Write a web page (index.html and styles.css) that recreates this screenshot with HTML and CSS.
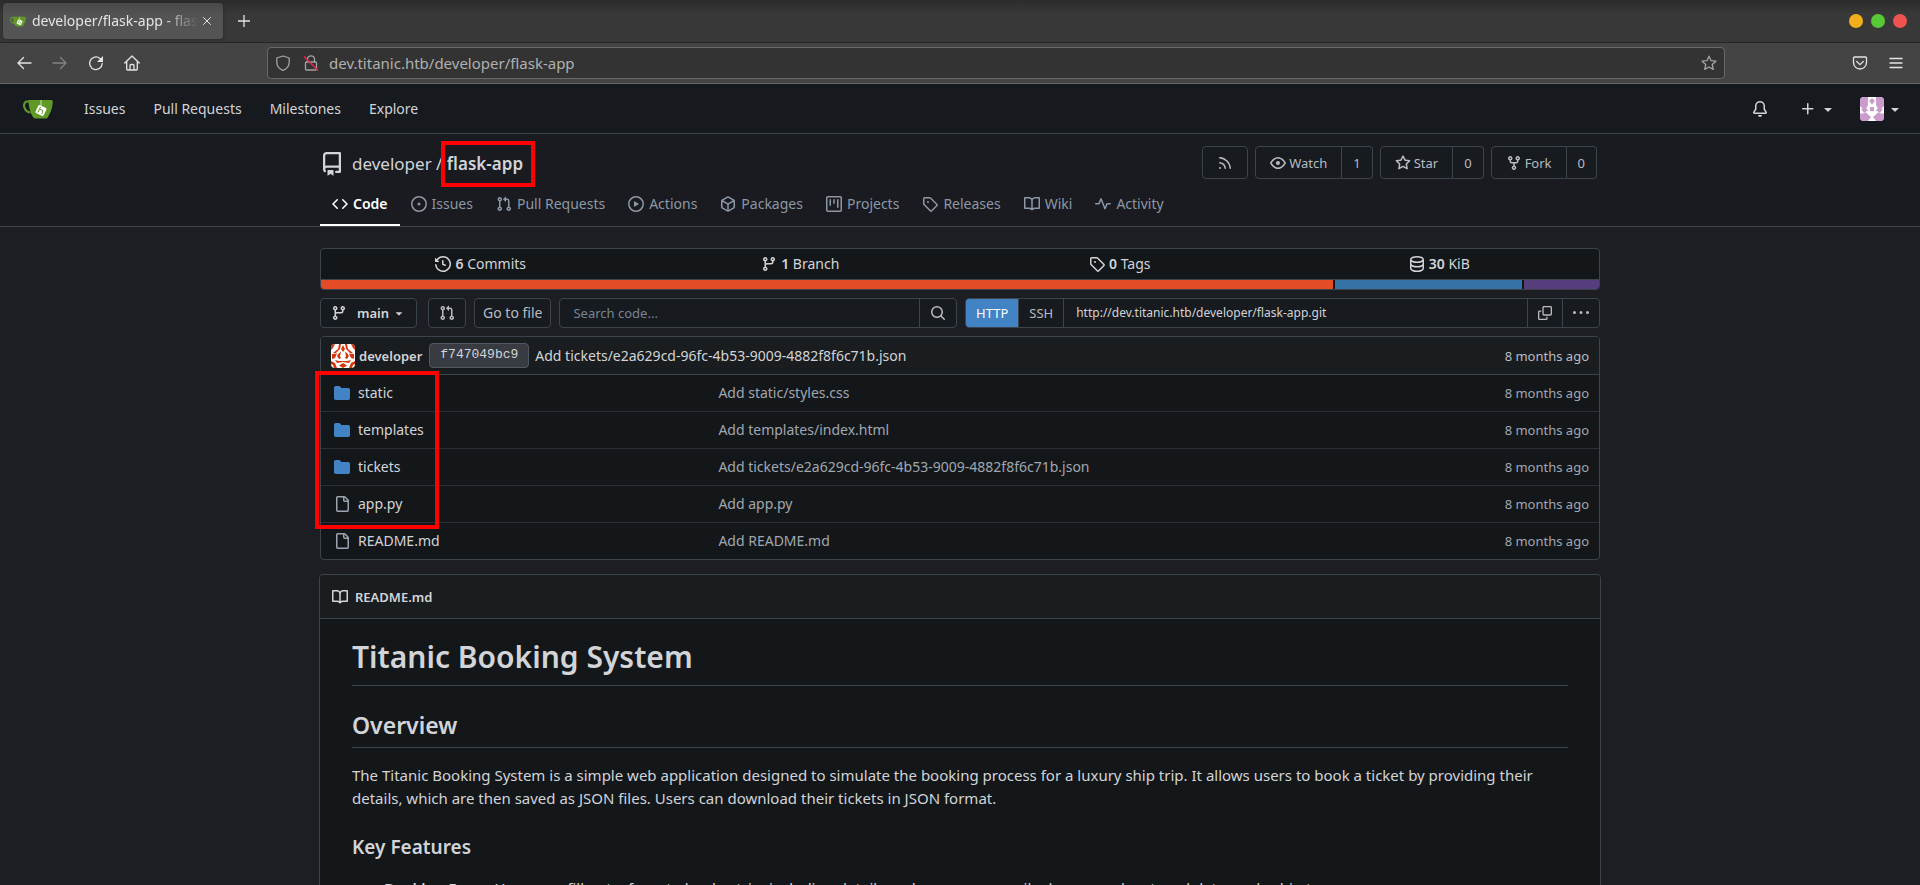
FILE: index.html
```html
<!DOCTYPE html>
<html lang="en">
<head>
<meta charset="utf-8">
<title>developer/flask-app - flask-app - Gitea</title>
<link rel="stylesheet" href="styles.css">
</head>
<body>
<svg class="sprite" aria-hidden="true">
  <symbol id="code" viewBox="0 0 16 16"><path d="m11.28 3.22 4.25 4.25a.75.75 0 0 1 0 1.06l-4.25 4.25a.749.749 0 0 1-1.275-.326.749.749 0 0 1 .215-.734L13.94 8l-3.72-3.72a.749.749 0 0 1 .326-1.275.749.749 0 0 1 .734.215Zm-6.56 0a.751.751 0 0 1 1.042.018.751.751 0 0 1 .018 1.042L2.06 8l3.72 3.72a.749.749 0 0 1-.326 1.275.749.749 0 0 1-.734-.215L.47 8.53a.75.75 0 0 1 0-1.06Z"/></symbol>
  <symbol id="issue" viewBox="0 0 16 16"><path d="M8 9.5a1.5 1.5 0 1 0 0-3 1.5 1.5 0 0 0 0 3Z"/><path d="M8 0a8 8 0 1 1 0 16A8 8 0 0 1 8 0ZM1.5 8a6.5 6.5 0 1 0 13 0 6.5 6.5 0 0 0-13 0Z"/></symbol>
  <symbol id="pull" viewBox="0 0 16 16"><path d="M1.5 3.25a2.25 2.25 0 1 1 3 2.122v5.256a2.251 2.251 0 1 1-1.5 0V5.372A2.25 2.25 0 0 1 1.5 3.25Zm5.677-.177L9.573.677A.25.25 0 0 1 10 .854V2.5h1A2.5 2.5 0 0 1 13.5 5v5.628a2.251 2.251 0 1 1-1.5 0V5a1 1 0 0 0-1-1h-1v1.646a.25.25 0 0 1-.427.177L7.177 3.427a.25.25 0 0 1 0-.354ZM3.75 2.5a.75.75 0 1 0 0 1.5.75.75 0 0 0 0-1.5Zm0 9.5a.75.75 0 1 0 0 1.5.75.75 0 0 0 0-1.5Zm8.25.75a.75.75 0 1 0 1.5 0 .75.75 0 0 0-1.5 0Z"/></symbol>
  <symbol id="play" viewBox="0 0 16 16"><path d="M8 0a8 8 0 1 1 0 16A8 8 0 0 1 8 0ZM1.5 8a6.5 6.5 0 1 0 13 0 6.5 6.5 0 0 0-13 0Zm4.879-2.773 4.264 2.559a.25.25 0 0 1 0 .428l-4.264 2.559A.25.25 0 0 1 6 10.559V5.442a.25.25 0 0 1 .379-.215Z"/></symbol>
  <symbol id="package" viewBox="0 0 16 16"><path d="m8.878.392 5.25 3.045c.54.314.872.89.872 1.514v6.098a1.75 1.75 0 0 1-.872 1.514l-5.25 3.045a1.75 1.75 0 0 1-1.756 0l-5.25-3.045A1.75 1.75 0 0 1 1 11.049V4.951c0-.624.332-1.201.872-1.514L7.122.392a1.75 1.75 0 0 1 1.756 0ZM7.875 1.69l-4.63 2.685L8 7.133l4.755-2.758-4.63-2.685a.248.248 0 0 0-.25 0ZM2.5 5.677v5.372c0 .09.047.171.125.216l4.625 2.683V8.432Zm6.25 8.271 4.625-2.683a.25.25 0 0 0 .125-.216V5.677L8.75 8.432Z"/></symbol>
  <symbol id="project" viewBox="0 0 16 16"><path d="M1.75 0h12.5C15.216 0 16 .784 16 1.75v12.5A1.75 1.75 0 0 1 14.25 16H1.75A1.75 1.75 0 0 1 0 14.25V1.75C0 .784.784 0 1.75 0ZM1.5 1.75v12.5c0 .138.112.25.25.25h12.5a.25.25 0 0 0 .25-.25V1.75a.25.25 0 0 0-.25-.25H1.75a.25.25 0 0 0-.25.25ZM11.75 3a.75.75 0 0 1 .75.75v7.5a.75.75 0 0 1-1.5 0v-7.5a.75.75 0 0 1 .75-.75Zm-8.25.75a.75.75 0 0 1 1.5 0v5.5a.75.75 0 0 1-1.5 0ZM8 3a.75.75 0 0 1 .75.75v3.5a.75.75 0 0 1-1.5 0v-3.5A.75.75 0 0 1 8 3Z"/></symbol>
  <symbol id="tag" viewBox="0 0 16 16"><path d="M1 7.775V2.75C1 1.784 1.784 1 2.75 1h5.025c.464 0 .91.184 1.238.513l6.25 6.25a1.75 1.75 0 0 1 0 2.474l-5.026 5.026a1.75 1.75 0 0 1-2.474 0l-6.25-6.25A1.752 1.752 0 0 1 1 7.775Zm1.5 0c0 .066.026.13.073.177l6.25 6.25a.25.25 0 0 0 .354 0l5.025-5.025a.25.25 0 0 0 0-.354l-6.25-6.25a.25.25 0 0 0-.177-.073H2.75a.25.25 0 0 0-.25.25ZM6 5a1 1 0 1 1 0 2 1 1 0 0 1 0-2Z"/></symbol>
  <symbol id="book" viewBox="0 0 16 16"><path d="M0 1.75A.75.75 0 0 1 .75 1h4.253c1.227 0 2.317.59 3 1.501A3.743 3.743 0 0 1 11.006 1h4.245a.75.75 0 0 1 .75.75v10.5a.75.75 0 0 1-.75.75h-4.507a2.25 2.25 0 0 0-1.591.659l-.622.621a.75.75 0 0 1-1.06 0l-.622-.621A2.25 2.25 0 0 0 5.258 13H.75a.75.75 0 0 1-.75-.75Zm7.251 10.324.004-5.073-.002-2.253A2.25 2.25 0 0 0 5.003 2.5H1.5v9h3.757a3.75 3.75 0 0 1 1.994.574ZM8.755 4.75l-.004 7.322a3.752 3.752 0 0 1 1.992-.572H14.5v-9h-3.495a2.25 2.25 0 0 0-2.25 2.25Z"/></symbol>
  <symbol id="pulse" viewBox="0 0 16 16"><path d="M6 2c.306 0 .582.187.696.471L10 10.731l1.304-3.26A.751.751 0 0 1 12 7h3.25a.75.75 0 0 1 0 1.5h-2.742l-1.812 4.528a.751.751 0 0 1-1.392 0L6 4.77 4.696 8.03A.75.75 0 0 1 4 8.5H.75a.75.75 0 0 1 0-1.5h2.742l1.812-4.529A.751.751 0 0 1 6 2Z"/></symbol>
  <symbol id="history" viewBox="0 0 16 16"><path d="m.427 1.927 1.215 1.215a8.002 8.002 0 1 1-1.6 5.685.75.75 0 1 1 1.493-.154 6.5 6.5 0 1 0 1.18-4.458l1.358 1.358A.25.25 0 0 1 3.896 6H.25A.25.25 0 0 1 0 5.75V2.104a.25.25 0 0 1 .427-.177ZM7.75 4a.75.75 0 0 1 .75.75v2.992l2.028.812a.75.75 0 0 1-.557 1.392l-2.5-1A.751.751 0 0 1 7 8.25v-3.5A.75.75 0 0 1 7.75 4Z"/></symbol>
  <symbol id="branch" viewBox="0 0 16 16"><path d="M9.5 3.25a2.25 2.25 0 1 1 3 2.122V6A2.5 2.5 0 0 1 10 8.5H6a1 1 0 0 0-1 1v1.128a2.251 2.251 0 1 1-1.5 0V5.372a2.25 2.25 0 1 1 1.5 0v1.836A2.493 2.493 0 0 1 6 7h4a1 1 0 0 0 1-1v-.628A2.25 2.25 0 0 1 9.5 3.25Zm-6 0a.75.75 0 1 0 1.5 0 .75.75 0 0 0-1.5 0Zm8.25-.75a.75.75 0 1 0 0 1.5.75.75 0 0 0 0-1.5ZM4.25 12a.75.75 0 1 0 0 1.5.75.75 0 0 0 0-1.5Z"/></symbol>
  <symbol id="database" viewBox="0 0 16 16"><path d="M1 3.5c0-.626.292-1.165.7-1.59.406-.422.956-.767 1.579-1.041C4.525.32 6.195 0 8 0c1.805 0 3.475.32 4.722.869.622.274 1.172.62 1.578 1.04.408.426.7.965.7 1.591v9c0 .626-.292 1.165-.7 1.59-.406.422-.956.767-1.579 1.041C11.476 15.68 9.806 16 8 16c-1.805 0-3.475-.32-4.721-.869-.623-.274-1.173-.62-1.579-1.04-.408-.426-.7-.965-.7-1.591Zm1.5 0c0 .133.058.318.282.551.227.237.591.483 1.101.707C4.898 5.205 6.353 5.5 8 5.5c1.646 0 3.101-.295 4.118-.742.508-.224.873-.471 1.1-.708.224-.232.282-.417.282-.55 0-.133-.058-.318-.282-.551-.227-.237-.591-.483-1.101-.707C11.102 1.795 9.647 1.5 8 1.5c-1.646 0-3.101.295-4.118.742-.508.224-.873.471-1.1.708-.224.232-.282.417-.282.55Zm0 4.5c0 .133.058.318.282.551.227.237.591.483 1.101.707C4.898 9.705 6.353 10 8 10c1.646 0 3.101-.295 4.118-.742.508-.224.873-.471 1.1-.708.224-.232.282-.417.282-.55V5.724c-.241.15-.503.286-.778.407C11.475 6.68 9.805 7 8 7c-1.805 0-3.475-.32-4.721-.869a6.15 6.15 0 0 1-.779-.407Zm0 2.225V12.5c0 .133.058.318.282.55.227.237.592.484 1.1.708 1.016.447 2.471.742 4.118.742 1.647 0 3.102-.295 4.117-.742.51-.224.874-.47 1.101-.707.224-.233.282-.418.282-.551v-2.275c-.241.15-.503.285-.778.406-1.247.549-2.917.869-4.722.869-1.805 0-3.475-.32-4.721-.869a6.327 6.327 0 0 1-.779-.406Z"/></symbol>
  <symbol id="search" viewBox="0 0 16 16"><path d="M10.68 11.74a6 6 0 0 1-7.922-8.982 6 6 0 0 1 8.982 7.922l3.04 3.04a.749.749 0 0 1-.326 1.275.749.749 0 0 1-.734-.215ZM11.5 7a4.499 4.499 0 1 0-8.997 0A4.499 4.499 0 0 0 11.5 7Z"/></symbol>
  <symbol id="copy" viewBox="0 0 16 16"><path d="M0 6.75C0 5.784.784 5 1.75 5h1.5a.75.75 0 0 1 0 1.5h-1.5a.25.25 0 0 0-.25.25v7.5c0 .138.112.25.25.25h7.5a.25.25 0 0 0 .25-.25v-1.5a.75.75 0 0 1 1.5 0v1.5A1.75 1.75 0 0 1 9.25 16h-7.5A1.75 1.75 0 0 1 0 14.25Z"/><path d="M5 1.75C5 .784 5.784 0 6.75 0h7.5C15.216 0 16 .784 16 1.75v7.5A1.75 1.75 0 0 1 14.25 11h-7.5A1.75 1.75 0 0 1 5 9.25Zm1.75-.25a.25.25 0 0 0-.25.25v7.5c0 .138.112.25.25.25h7.5a.25.25 0 0 0 .25-.25v-7.5a.25.25 0 0 0-.25-.25Z"/></symbol>
  <symbol id="kebab" viewBox="0 0 16 16"><path d="M8 9a1.5 1.5 0 1 0 0-3 1.5 1.5 0 0 0 0 3ZM1.5 9a1.5 1.5 0 1 0 0-3 1.5 1.5 0 0 0 0 3Zm13 0a1.5 1.5 0 1 0 0-3 1.5 1.5 0 0 0 0 3Z"/></symbol>
  <symbol id="folder" viewBox="0 0 16 16"><path d="M1.75 1A1.75 1.75 0 0 0 0 2.75v10.5C0 14.216.784 15 1.75 15h12.5A1.75 1.75 0 0 0 16 13.25v-8.5A1.75 1.75 0 0 0 14.25 3H7.5a.25.25 0 0 1-.2-.1l-.9-1.2C6.07 1.26 5.55 1 5 1H1.75Z"/></symbol>
  <symbol id="file" viewBox="0 0 16 16"><path d="M2 1.75C2 .784 2.784 0 3.75 0h6.586c.464 0 .909.184 1.237.513l2.914 2.914c.329.328.513.773.513 1.237v9.586A1.75 1.75 0 0 1 13.25 16h-9.5A1.75 1.75 0 0 1 2 14.25Zm1.75-.25a.25.25 0 0 0-.25.25v12.5c0 .138.112.25.25.25h9.5a.25.25 0 0 0 .25-.25V6h-2.75A1.75 1.75 0 0 1 9 4.25V1.5Zm6.75.062V4.25c0 .138.112.25.25.25h2.688l-.011-.013-2.914-2.914-.013-.011Z"/></symbol>
  <symbol id="rss" viewBox="0 0 16 16"><path d="M2.002 2.725a.75.75 0 0 1 .797-.699C8.79 2.42 13.58 7.21 13.974 13.201a.75.75 0 0 1-1.497.098 10.502 10.502 0 0 0-9.776-9.776.747.747 0 0 1-.7-.798ZM2.84 7.05h-.002a7.002 7.002 0 0 1 6.113 6.111.75.75 0 0 1-1.49.178 5.503 5.503 0 0 0-4.8-4.8.75.75 0 0 1 .179-1.489ZM2 13a1 1 0 1 1 2 0 1 1 0 0 1-2 0Z"/></symbol>
  <symbol id="eye" viewBox="0 0 16 16"><path d="M8 2c1.981 0 3.671.992 4.933 2.078 1.27 1.091 2.187 2.345 2.637 3.023a1.62 1.62 0 0 1 0 1.798c-.45.678-1.367 1.932-2.637 3.023C11.67 13.008 9.981 14 8 14c-1.981 0-3.671-.992-4.933-2.078C1.797 10.83.88 9.576.43 8.898a1.62 1.62 0 0 1 0-1.798c.45-.677 1.367-1.931 2.637-3.022C4.33 2.992 6.019 2 8 2ZM1.679 7.932a.12.12 0 0 0 0 .136c.411.622 1.241 1.75 2.366 2.717C5.176 11.758 6.527 12.5 8 12.5c1.473 0 2.825-.742 3.955-1.715 1.124-.967 1.954-2.096 2.366-2.717a.12.12 0 0 0 0-.136c-.412-.621-1.242-1.75-2.366-2.717C10.824 4.242 9.473 3.5 8 3.5c-1.473 0-2.825.742-3.955 1.715-1.124.967-1.954 2.096-2.366 2.717ZM8 10a2 2 0 1 1-.001-3.999A2 2 0 0 1 8 10Z"/></symbol>
  <symbol id="star" viewBox="0 0 16 16"><path d="M8 .25a.75.75 0 0 1 .673.418l1.882 3.815 4.21.612a.75.75 0 0 1 .416 1.279l-3.046 2.97.719 4.192a.751.751 0 0 1-1.088.791L8 12.347l-3.766 1.98a.75.75 0 0 1-1.088-.79l.72-4.194L.818 6.374a.75.75 0 0 1 .416-1.28l4.21-.611L7.327.668A.75.75 0 0 1 8 .25Zm0 2.445L6.615 5.5a.75.75 0 0 1-.564.41l-3.097.45 2.24 2.184a.75.75 0 0 1 .216.664l-.528 3.084 2.769-1.456a.75.75 0 0 1 .698 0l2.77 1.456-.53-3.084a.75.75 0 0 1 .216-.664l2.24-2.183-3.096-.45a.75.75 0 0 1-.564-.41L8 2.694Z"/></symbol>
  <symbol id="fork" viewBox="0 0 16 16"><path d="M5 5.372v.878c0 .414.336.75.75.75h4.5a.75.75 0 0 0 .75-.75v-.878a2.25 2.25 0 1 1 1.5 0v.878a2.25 2.25 0 0 1-2.25 2.25h-1.5v2.128a2.251 2.251 0 1 1-1.5 0V8.5h-1.5A2.25 2.25 0 0 1 3.5 6.25v-.878a2.25 2.25 0 1 1 1.5 0ZM5 3.25a.75.75 0 1 0-1.5 0 .75.75 0 0 0 1.5 0Zm6.75.75a.75.75 0 1 0 0-1.5.75.75 0 0 0 0 1.5Zm-3 8.75a.75.75 0 1 0-1.5 0 .75.75 0 0 0 1.5 0Z"/></symbol>
  <symbol id="repo" viewBox="0 0 16 16"><path d="M2 2.5A2.5 2.5 0 0 1 4.5 0h8.75a.75.75 0 0 1 .75.75v12.5a.75.75 0 0 1-.75.75h-2.5a.75.75 0 0 1 0-1.5h1.75v-2h-8a1 1 0 0 0-.714 1.7.75.75 0 1 1-1.072 1.05A2.495 2.495 0 0 1 2 11.5Zm10.5-1h-8a1 1 0 0 0-1 1v6.708A2.486 2.486 0 0 1 4.5 9h8ZM5 12.25a.25.25 0 0 1 .25-.25h3.5a.25.25 0 0 1 .25.25v3.25a.25.25 0 0 1-.4.2l-1.45-1.087a.249.249 0 0 0-.3 0L5.4 15.7a.25.25 0 0 1-.4-.2Z"/></symbol>
  <symbol id="bell" viewBox="0 0 16 16"><path d="M8 16a2 2 0 0 0 1.985-1.75c.017-.137-.097-.25-.235-.25h-3.5c-.138 0-.252.113-.235.25A2 2 0 0 0 8 16ZM3 5a5 5 0 0 1 10 0v2.947c0 .05.015.098.042.139l1.703 2.555A1.519 1.519 0 0 1 13.482 13H2.518a1.516 1.516 0 0 1-1.263-2.36l1.703-2.554A.255.255 0 0 0 3 7.947Zm5-3.5A3.5 3.5 0 0 0 4.5 5v2.947c0 .346-.102.683-.294.97l-1.703 2.556a.017.017 0 0 0-.003.01l.001.006c0 .002.002.004.004.006l.006.004.007.001h10.964l.007-.001.006-.004.004-.006.001-.007a.017.017 0 0 0-.003-.01l-1.703-2.554a1.745 1.745 0 0 1-.294-.97V5A3.5 3.5 0 0 0 8 1.5Z"/></symbol>
  <symbol id="plus" viewBox="0 0 16 16"><path d="M7.75 2a.75.75 0 0 1 .75.75V7h4.25a.75.75 0 0 1 0 1.5H8.5v4.25a.75.75 0 0 1-1.5 0V8.5H2.75a.75.75 0 0 1 0-1.5H7V2.75A.75.75 0 0 1 7.75 2Z"/></symbol>
  <symbol id="caret" viewBox="0 0 16 16"><path d="m4.427 7.427 3.396 3.396a.25.25 0 0 0 .354 0l3.396-3.396A.25.25 0 0 0 11.396 7H4.604a.25.25 0 0 0-.177.427Z"/></symbol>
  <symbol id="cup" viewBox="0 0 30 20">
    <path d="M6 2.500H3.200C-.5 4.500.5 12.500 7.500 13.500" fill="none" stroke="#609926" stroke-width="2"/>
    <path d="M5.500 1H28.500Q30 1 29.800 3C29.500 8 28 13 25 18Q24 19.500 22.500 19.500H12.500Q11 19.500 10 18C7.500 14 5.500 8 5.500 1Z" fill="#609926"/>
    <path d="M18 1V7" stroke="#fff" stroke-width="1" opacity=".7"/>
    <rect x="13.500" y="7" width="9" height="9" rx="1.500" fill="#fff" transform="rotate(25 18 11.500)"/>
    <path d="M17.500 8 14.800 13.600M17 10.500q4 .4 2.600 2.600L18.600 15" fill="none" stroke="#609926" stroke-width="1"/>
  </symbol>
</svg>

<div class="window">
  <header class="browser">
    <div class="tabstrip">
      <div class="tab">
        <svg class="favicon"><use href="#cup"/></svg>
        <span class="tab-title">developer/flask-app - flask-app</span>
        <button class="plain" aria-label="Close tab"><svg class="i8" viewBox="0 0 8 8"><path class="line" d="M.5.5l7 7M7.500.5l-7 7"/></svg></button>
      </div>
      <button class="plain new-tab" aria-label="New tab"><svg class="i12" viewBox="0 0 12 12"><path class="line thick" d="M6 0V12M0 6H12"/></svg></button>
      <div class="window-dots"><i class="dot amber"></i><i class="dot green"></i><i class="dot red"></i></div>
    </div>
    <div class="toolbar">
      <div class="nav-buttons">
        <button class="plain" aria-label="Back"><svg class="i16" viewBox="0 0 16 16"><path class="line thick" d="M15 8H2M7.500 2.500 2 8l5.500 5.500"/></svg></button>
        <button class="plain dim" aria-label="Forward" disabled><svg class="i16" viewBox="0 0 16 16"><path class="line thick" d="M1 8H14M8.500 2.500 14 8l-5.500 5.500"/></svg></button>
        <button class="plain" aria-label="Reload"><svg class="i16" viewBox="0 0 16 16"><path class="line thick" d="M14.200 8.500A6.300 6.300 0 1 1 12 3.500l2 1.800"/><path d="M15 1V7H9Z"/></svg></button>
        <button class="plain" aria-label="Home"><svg class="i16" viewBox="0 0 16 16"><path class="line thick" d="M.8 8 8 1l7.200 7M2.700 6.500V14.200q0 .8.8.8h9q.8 0 .8-.8V6.500M6 15V10.500Q6 9.500 7 9.500H9Q10 9.500 10 10.500V15"/></svg></button>
      </div>
      <div class="urlbar">
        <svg class="i16" viewBox="0 0 16 16"><path class="line thick" d="M8 1 14.200 3V7C14.200 11 11.500 14 8 15.300 4.500 14 1.800 11 1.800 7V3Z"/></svg>
        <svg class="i16 lock" viewBox="0 0 16 16"><path class="line thick" d="M4.500 7V4.300a3.500 3.500 0 0 1 7 0V7M3.500 7h9q1 0 1 1v6q0 1-1 1h-9q-1 0-1-1V8q0-1 1-1Z"/><path d="M1 1.500 15 15.500" stroke="#e22850" stroke-width="1.600"/></svg>
        <input class="url" type="text" aria-label="Address" value="dev.titanic.htb/developer/flask-app">
        <svg class="i16" viewBox="0 0 16 16"><path class="line thick" d="m8 1.200 2 4.500 4.900.5-3.700 3.300 1.100 4.900L8 12l-4.300 2.400 1.100-4.900L1.100 6.200 6 5.700Z"/></svg>
      </div>
      <div class="toolbar-end">
        <button class="plain" aria-label="Save to Pocket"><svg class="i16" viewBox="0 0 16 16"><path class="line thick" d="M2.500 2h11q1 0 1 1V7.500a6.500 6.500 0 0 1-13 0V3q0-1 1-1ZM4.700 6.500 8 9.600 11.300 6.500"/></svg></button>
        <button class="plain" aria-label="Menu"><svg class="i16" viewBox="0 0 16 16"><path class="line thick" d="M2 3.500H14M2 8H14M2 12.500H14"/></svg></button>
      </div>
    </div>
  </header>

  <div class="page">
    <nav class="navbar" aria-label="Main">
      <a class="logo" href="#" aria-label="Home"><svg class="cup"><use href="#cup"/></svg></a>
      <a href="#">Issues</a>
      <a href="#">Pull Requests</a>
      <a href="#">Milestones</a>
      <a href="#">Explore</a>
      <div class="navbar-end">
        <a class="bell" href="#" aria-label="Notifications"><svg class="i16"><use href="#bell"/></svg></a>
        <button class="plain" aria-label="Create"><svg class="i16"><use href="#plus"/></svg><svg class="i16 caret"><use href="#caret"/></svg></button>
        <button class="plain account" aria-label="Account">
          <svg class="avatar" viewBox="0 0 24 24"><rect width="24" height="24" fill="#fff"/><g fill="#cb9bcd"><path d="M0 0H8V8L6 12H3L0 9ZM24 0H16V8L18 12H21L24 9ZM12 1l3 3-3 3.500L9 4ZM10 10h4v4h-4ZM1 12H7L8 13.500 4 16ZM23 12H17L16 13.500 20 16ZM0 16.500H3L6 15.500 11 20 8 24H0ZM24 16.500H21L18 15.500 13 20 16 24H24Z"/></g></svg>
          <svg class="i16 caret"><use href="#caret"/></svg></button>
      </div>
    </nav>

    <div class="repo-header">
      <div class="container">
        <div class="repo-top">
          <div class="repo-title">
            <svg class="i24"><use href="#repo"/></svg>
            <div><a href="#">developer</a> / <a class="marked" href="#">flask-app</a></div>
          </div>
          <div class="repo-buttons">
            <a class="button" href="#" aria-label="RSS feed"><svg class="i16"><use href="#rss"/></svg></a>
            <div class="split"><button class="button"><svg class="i16"><use href="#eye"/></svg>Watch</button><a class="button count" href="#">1</a></div>
            <div class="split"><button class="button"><svg class="i16"><use href="#star"/></svg>Star</button><a class="button count" href="#">0</a></div>
            <div class="split"><button class="button"><svg class="i16"><use href="#fork"/></svg>Fork</button><a class="button count" href="#">0</a></div>
          </div>
        </div>
        <nav class="repo-tabs" aria-label="Repository">
          <a class="active" href="#"><svg class="i16"><use href="#code"/></svg>Code</a>
          <a href="#"><svg class="i16"><use href="#issue"/></svg>Issues</a>
          <a href="#"><svg class="i16"><use href="#pull"/></svg>Pull Requests</a>
          <a href="#"><svg class="i16"><use href="#play"/></svg>Actions</a>
          <a href="#"><svg class="i16"><use href="#package"/></svg>Packages</a>
          <a href="#"><svg class="i16"><use href="#project"/></svg>Projects</a>
          <a href="#"><svg class="i16"><use href="#tag"/></svg>Releases</a>
          <a href="#"><svg class="i16"><use href="#book"/></svg>Wiki</a>
          <a href="#"><svg class="i16"><use href="#pulse"/></svg>Activity</a>
        </nav>
      </div>
    </div>

    <main class="container content">
      <section class="summary">
        <div class="stats">
          <a href="#"><svg class="i16"><use href="#history"/></svg><span><b>6</b> Commits</span></a>
          <a href="#"><svg class="i16"><use href="#branch"/></svg><span><b>1</b> Branch</span></a>
          <a href="#"><svg class="i16"><use href="#tag"/></svg><span><b>0</b> Tags</span></a>
          <span class="stat"><svg class="i16"><use href="#database"/></svg><span><b>30</b> KiB</span></span>
        </div>
        <div class="languages">
          <div class="html" style="width:79.2%"></div>
          <div class="python" style="width:14.6%"></div>
          <div class="css"></div>
        </div>
      </section>

      <div class="actions">
        <button class="button branch"><svg class="i16"><use href="#branch"/></svg><b>main</b><svg class="i14"><use href="#caret"/></svg></button>
        <button class="button" aria-label="New pull request"><svg class="i16"><use href="#pull"/></svg></button>
        <a class="button goto" href="#">Go to file</a>
        <form class="group code-search">
          <input type="text" placeholder="Search code..." aria-label="Search code">
          <button class="plain" type="button" aria-label="Search"><svg class="i16"><use href="#search"/></svg></button>
        </form>
        <div class="group clone">
          <button class="plain on">HTTP</button>
          <button class="plain">SSH</button>
          <input type="text" readonly value="http://dev.titanic.htb/developer/flask-app.git" aria-label="Clone URL">
          <button class="plain" aria-label="Copy URL"><svg class="i14"><use href="#copy"/></svg></button>
          <button class="plain" aria-label="More operations"><svg class="i16"><use href="#kebab"/></svg></button>
        </div>
      </div>

      <div class="files-wrap">
        <table class="files">
          <colgroup><col class="col-name"><col><col class="col-age"></colgroup>
          <thead>
            <tr>
              <th colspan="2"><div class="commit">
                <svg class="avatar" viewBox="0 0 24 24"><rect width="24" height="24" fill="#fff"/><g fill="#d2360b"><path d="M8 0H10L9 5 5 9H2L7 5ZM16 0H14L15 5 19 9H22L17 5ZM12 1l2 4-2 3-2-3ZM0 0H4L2 4 0 6ZM24 0H20L22 4 24 6ZM1 10 6 9.500 4 14 1 15ZM23 10 18 9.500 20 14 23 15ZM8 9 10 8 9 12 10 14 8 15 6 12ZM16 9 14 8 15 12 14 14 16 15 18 12ZM4 16 8 17H16L20 16 18 19 12 18 6 19ZM0 17 4 19 6 24H3L2 21 0 20ZM24 17 20 19 18 24H21L22 21 24 20ZM12 19 16 21.500 12 24 8 21.500Z"/></g></svg>
                <a class="author" href="#">developer</a>
                <a class="sha" href="#">f747049bc9</a>
                <a class="message" href="#">Add tickets/e2a629cd-96fc-4b53-9009-4882f8f6c71b.json</a>
              </div></th>
              <th class="age">8 months ago</th>
            </tr>
          </thead>
          <tbody>
            <tr><td><a class="entry dir" href="#"><svg class="i16"><use href="#folder"/></svg>static</a></td><td class="msg"><a href="#">Add static/styles.css</a></td><td class="age">8 months ago</td></tr>
            <tr><td><a class="entry dir" href="#"><svg class="i16"><use href="#folder"/></svg>templates</a></td><td class="msg"><a href="#">Add templates/index.html</a></td><td class="age">8 months ago</td></tr>
            <tr><td><a class="entry dir" href="#"><svg class="i16"><use href="#folder"/></svg>tickets</a></td><td class="msg"><a href="#">Add tickets/e2a629cd-96fc-4b53-9009-4882f8f6c71b.json</a></td><td class="age">8 months ago</td></tr>
            <tr><td><a class="entry" href="#"><svg class="i16"><use href="#file"/></svg>app.py</a></td><td class="msg"><a href="#">Add app.py</a></td><td class="age">8 months ago</td></tr>
            <tr><td><a class="entry" href="#"><svg class="i16"><use href="#file"/></svg>README.md</a></td><td class="msg"><a href="#">Add README.md</a></td><td class="age">8 months ago</td></tr>
          </tbody>
        </table>
        <div class="files-mark"></div>
      </div>

      <section class="readme">
        <h4 class="readme-head"><svg class="i16"><use href="#book"/></svg><a href="#">README.md</a></h4>
        <article class="markup">
          <h1>Titanic Booking System</h1>
          <h2>Overview</h2>
          <p>The Titanic Booking System is a simple web application designed to simulate the booking process for a luxury ship trip. It allows users to book a ticket by providing their details, which are then saved as JSON files. Users can download their tickets in JSON format.</p>
          <h3>Key Features</h3>
          <ul><li><b>Booking Form:</b> Users can fill out a form to book a trip, including details such as name, email, phone number, travel date, and cabin type.</li></ul>
        </article>
      </section>
    </main>
  </div>
</div>
</body>
</html>
```

FILE: styles.css
```css
:root {
  --text: #d2d4d8;
  --text-dim: #b8bcc2;
  --text-light: #8c98a5;
  --body: #1c1e23;
  --nav: #16191e;
  --sub: #191b20;
  --box: #14171a;
  --box-head: #1a1d1f;
  --input: #171a1e;
  --line: #3b444c;
  --line-soft: #2b2f35;
  --primary: #4183c4;
}

* { box-sizing: border-box; }

body {
  margin: 0;
  color: var(--text);
  background: var(--body);
  font: 14px/20px "Noto Sans", "Liberation Sans", sans-serif;
}

a { color: inherit; text-decoration: none; }
b, h1, h2, h3, h4 { font-weight: 600; }
button, input { font: inherit; color: inherit; margin: 0; }
input { min-width: 0; border: 0; outline: 0; background: none; }
svg { display: block; flex: none; fill: currentColor; }

.sprite { position: absolute; width: 0; height: 0; }
.line { fill: none; stroke: currentColor; stroke-linecap: round; stroke-linejoin: round; }
.thick { stroke-width: 1.3; }
.i8 { width: 8px; height: 8px; }
.i12 { width: 12px; height: 12px; }
.i14 { width: 14px; height: 14px; }
.i16 { width: 16px; height: 16px; }
.i24 { width: 24px; height: 24px; }
.avatar { width: 24px; height: 24px; border-radius: 4px; }

.plain {
  display: flex;
  align-items: center;
  justify-content: center;
  padding: 0;
  border: 0;
  background: none;
}

.window { display: flex; flex-direction: column; height: 100vh; overflow: hidden; }
.page { flex: 1; overflow: hidden; }

/* Browser frame */
.browser { flex: none; color: #e4e4e4; background: #444; border-bottom: 1px solid #666; }
.tabstrip {
  display: flex;
  align-items: center;
  height: 43px;
  padding: 0 13px 0 3px;
  background: linear-gradient(#2c2c2c, #383838 14px);
  border-bottom: 1px solid #252525;
}
.tab {
  display: flex;
  align-items: center;
  width: 220px;
  height: 36px;
  padding: 0 12px 0 7px;
  border-radius: 4px;
  background: linear-gradient(#4a4a4a, #545454 14px);
  box-shadow: 0 0 3px #222;
}
.favicon { width: 16px; height: 11px; margin-right: 6px; }
.tab-title {
  flex: 1;
  overflow: hidden;
  margin-right: 4px;
  white-space: nowrap;
  mask-image: linear-gradient(90deg, #000 78%, transparent);
}
.new-tab { margin-left: 15px; }
.window-dots { display: flex; gap: 8px; margin-left: auto; }
.dot { width: 14px; height: 14px; border-radius: 50%; }
.amber { background: #f2ae1b; }
.green { background: #58c837; }
.red { background: #ee5350; }

.toolbar { display: flex; align-items: center; height: 40px; padding: 0 16px; }
.nav-buttons { display: flex; gap: 20px; width: 251px; }
.dim { color: #828282; }
.urlbar {
  display: flex;
  flex: 1;
  align-items: center;
  height: 32px;
  padding: 0 7px;
  color: #a4a4a4;
  background: #333;
  border: 1px solid #6a6a6a;
  border-radius: 4px;
}
.lock { margin: 0 10px 0 12px; }
.url { flex: 1; padding: 0; font-size: 15px; color: #b0b0b0; }
.toolbar-end { display: flex; gap: 20px; justify-content: flex-end; width: 179px; }

/* Site navigation */
.navbar {
  display: flex;
  align-items: center;
  gap: 28px;
  height: 50px;
  padding: 0 17px 0 23px;
  background: var(--nav);
  border-bottom: 1px solid var(--line);
}
.logo { margin-right: 3px; }
.cup { width: 30px; height: 20px; }
.navbar-end { display: flex; align-items: center; gap: 24px; margin-left: auto; }
.navbar-end .plain { gap: 4px; }
.navbar-end .account { gap: 3px; }
.bell { margin-right: 8px; }

/* Repository header */
.container { max-width: 1280px; margin: 0 auto; }
.repo-header { background: var(--sub); border-bottom: 1px solid var(--line); }
.repo-top { display: flex; justify-content: space-between; padding: 12px 3px 0 0; }
.repo-title { display: flex; align-items: center; gap: 8px; padding-top: 2px; font-size: 17px; line-height: 24px; }
.marked { position: relative; font-weight: 600; }
.marked::after {
  content: "";
  position: absolute;
  inset: -11px -12px -12px -6px;
  border: 4px solid #f00;
}
.repo-buttons { display: flex; gap: 7px; }
.split { display: flex; }
.button {
  display: flex;
  align-items: center;
  justify-content: center;
  padding: 0 10px;
  color: var(--text-dim);
  background: var(--input);
  border: 1px solid var(--line);
  border-radius: 4px;
}
.repo-buttons .button { gap: 3px; height: 33px; padding: 0 14px; font-size: 13px; }
.split .button:first-child { border-radius: 4px 0 0 4px; }
.repo-buttons .count { padding: 0 11px; border-left: 0; border-radius: 0 4px 4px 0; }

.repo-tabs { display: flex; height: 47px; }
.repo-tabs a {
  display: flex;
  align-items: center;
  gap: 5px;
  padding: 4px 12px 0 11px;
  color: var(--text-light);
  border-bottom: 2px solid transparent;
}
.repo-tabs .active { padding-left: 12px; color: #fff; font-weight: 600; border-color: #fff; }

/* Repository summary */
.content { padding-top: 21px; }
.summary { overflow: hidden; background: var(--box); border: 1px solid var(--line); border-radius: 4px; }
.stats { display: grid; grid-template-columns: repeat(4, 1fr); height: 30px; }
.stats a, .stat { display: flex; align-items: center; justify-content: center; gap: 4px; }
.languages { display: flex; gap: 2px; height: 10px; border-top: 1px solid var(--line); }
.html { background: #e34c26; }
.python { background: #3572a5; }
.css { flex: 1; background: #563d7c; }

/* Branch, search and clone controls */
.actions { display: flex; gap: 8px; height: 30px; margin: 8px 0; }
.branch { margin-right: 3px; color: var(--text); }
.branch b { margin: 0 3px 0 10px; font-size: 13px; }
.goto { padding: 0 8px; }
.group {
  display: flex;
  overflow: hidden;
  font-size: 13px;
  background: var(--input);
  border: 1px solid var(--line);
  border-radius: 4px;
}
.group .plain { padding: 0 10px; color: var(--text-dim); border-right: 1px solid var(--line); }
.group .plain:last-child { border-right: 0; }
.group input { flex: 1; }
.code-search { flex: 5; }
.code-search input { padding: 0 13px; border-right: 1px solid var(--line); }
.code-search input::placeholder { color: #788592; opacity: 1; }
.clone { flex: 8; }
.clone input { padding: 0 12px; font-size: 12px; border-right: 1px solid var(--line); }
.group .on { color: #fff; background: var(--primary); }

/* File list */
.files-wrap { position: relative; }
.files-mark {
  position: absolute;
  top: 35px;
  left: -5px;
  width: 124px;
  height: 158px;
  border: 4px solid #f00;
}
.files {
  width: 100%;
  table-layout: fixed;
  overflow: hidden;
  border: 1px solid var(--line);
  border-radius: 4px;
  border-spacing: 0;
  background: var(--box);
}
.col-name { width: 30%; }
.col-age { width: 12%; }
.files th { height: 38px; padding: 0 10px; text-align: left; font-weight: 400; background: var(--box-head); border-bottom: 1px solid var(--line); }
.files td { height: 37px; padding: 0 13px; color: #a0a7b0; border-bottom: 1px solid var(--line-soft); }
.files tr:last-child td { height: 36px; border-bottom: 0; }
.files .age { padding: 0 10px; font-size: 13px; text-align: right; }
.files .msg { padding-left: 14px; }
.files th.age { color: var(--text-dim); }
.commit { display: flex; align-items: center; }
.author { margin: 0 7px 0 4px; font-size: 13px; font-weight: 600; }
.sha {
  padding: 1px 10px 3px;
  margin-right: 6px;
  font: 13px/19px "Liberation Mono", monospace;
  background: #383b42;
  border: 1px solid #53575e;
  border-radius: 4px;
}
.entry { display: flex; align-items: center; gap: 8px; color: var(--text); }
.entry svg { color: #9aa5b1; }
.entry.dir svg { color: var(--primary); }

/* Readme */
.readme { margin: 14px -1px 0; background: var(--box); border: 1px solid var(--line); border-radius: 4px; }
.readme-head {
  display: flex;
  align-items: center;
  gap: 7px;
  height: 44px;
  margin: 0;
  padding: 0 12px;
  font-size: 13px;
  background: var(--box-head);
  border-bottom: 1px solid var(--line);
  border-radius: 4px 4px 0 0;
}
.markup { padding: 18px 32px; font-size: 15px; line-height: 23px; }
.markup h1, .markup h2 { border-bottom: 1px solid var(--line); }
.markup h1 { margin: 0 0 24px; padding-bottom: 8px; font-size: 30px; line-height: 40px; }
.markup h2 { margin: 0 0 16px; padding-bottom: 7px; font-size: 23px; line-height: 30px; }
.markup p { margin: 0 0 25px; }
.markup h3 { margin: 0 0 17px; font-size: 19px; line-height: 25px; }
.markup ul { margin: 0; padding-left: 32px; }
```
